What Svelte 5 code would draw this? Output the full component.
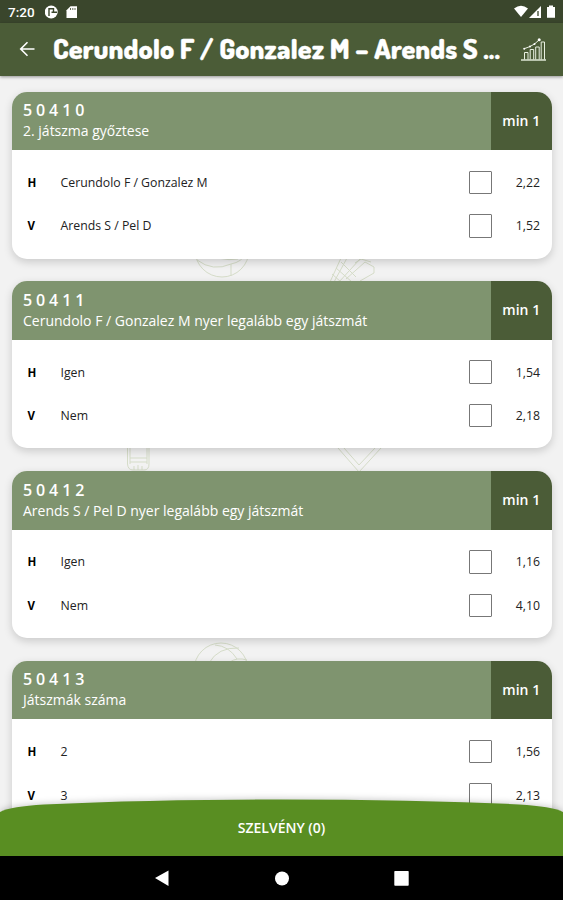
<script>
  const markets = [
    { id: '50410', name: '2. játszma győztese', picks: [['H', 'Cerundolo F / Gonzalez M', '2,22'], ['V', 'Arends S / Pel D', '1,52']] },
    { id: '50411', name: 'Cerundolo F / Gonzalez M nyer legalább egy játszmát', picks: [['H', 'Igen', '1,54'], ['V', 'Nem', '2,18']] },
    { id: '50412', name: 'Arends S / Pel D nyer legalább egy játszmát', picks: [['H', 'Igen', '1,16'], ['V', 'Nem', '4,10']] },
    { id: '50413', name: 'Játszmák száma', picks: [['H', '2', '1,56'], ['V', '3', '2,13']] }
  ];
</script>

<div class="screen">
  <div class="status">
    <span class="time">7:20</span>
    <svg class="left-icons" width="36" height="16" viewBox="0 0 36 16">
      <circle cx="6.2" cy="8" r="6.5" fill="#fff" />
      <path d="M4 12V4.800H8.500V8.200H6.500M8.800 8.200H12" fill="none" stroke="#3a462c" stroke-width="1.4" />
      <path d="M25.500 2.2H32V14H21.500V6.2Z" fill="#fff" />
      <path d="M25.500 4V6M27.800 4V6M30 4V6" stroke="#3a462c" stroke-width=".8" />
    </svg>
    <svg class="right-icons" width="44" height="16" viewBox="0 0 44 16">
      <path d="M0 4.4Q7-1 14 4.4L7 13Z" fill="#fff" />
      <path d="M15 14L27 2V14Z" fill="#fff" />
      <path d="M24 7V12" stroke="#3a462c" stroke-width="1.3" />
      <path d="M33 3.1H35V1.5H39V3.1H41V13.7H33Z" fill="#fff" />
    </svg>
  </div>
  <header>
    <svg class="back" width="17" height="16" viewBox="0 0 17 16" fill="none" stroke="#fff" stroke-width="1.6">
      <path d="M15.500 8H2M8.500 1.200L1.700 8L8.500 14.800" />
    </svg>
    <svg class="title" width="452" height="40" viewBox="0 0 452 40">
      <text x="0" y="27" textLength="447" lengthAdjust="spacingAndGlyphs">Cerundolo F / Gonzalez M – Arends S ...</text>
    </svg>
    <svg class="stats" width="26" height="25" viewBox="0 0 26 25" fill="none" stroke="#e8efe0" stroke-width="1">
      <path d="M0 23H25" stroke-width="1.4" />
      <path d="M3.5 22.5V15.5H7V22.5M9.2 22.5V12.5H12.7V22.5M14.7 22.5V10H18.2V22.5M20.2 22.5V5H23.5V22.5" />
      <path d="M3 11.8L9 9.5L13.5 7L18 3" />
      <circle cx="18.2" cy="2.8" r="1.5" fill="#fff" stroke="none" />
      <circle cx="3.2" cy="11.8" r="1" fill="#fff" stroke="none" />
      <circle cx="9" cy="9.4" r="1" fill="#fff" stroke="none" />
      <circle cx="13.5" cy="7" r="1" fill="#fff" stroke="none" />
    </svg>
  </header>

  <main>
    <svg class="pattern" width="563" height="781" viewBox="0 75 563 781" fill="none" stroke="#d5dcc8" stroke-width="1">
      <circle cx="222" cy="249" r="27" />
      <path d="M197 259Q213 271 231 263V275M231 263Q242 261 246 252M208 250Q219 261 238 258" />
      <path d="M330 281L341 257M334 281L347 257M339 281L360 258M332 273L341 281M336 267L352 281M341 261L356 276M346 278L365 261L374 266V272L360 280M355 262L361 258L371 261" />
      <path d="M127.500 445V463Q128 469 133 469H144Q149 469 149 463V445M130 445V463M147 445V463M130 457H147M130 461H147M134 469V465M138 469V464M142 469V465" />
      <path d="M338 447L359 471L381 447M344 447L359 464L375 447" />
      <circle cx="221" cy="669" r="27" />
      <path d="M209 662Q218 646 239 647M215 644Q229 645 237 658M230 661Q237 656 247 659" />
    </svg>
    {#each markets as m}
      <section>
        <div class="head">
          <div class="label">
            <div class="id">{m.id}</div>
            <div class="name">{m.name}</div>
          </div>
          <div class="min">min 1</div>
        </div>
        <div class="rows">
          {#each m.picks as p}
            <div class="row">
              <b>{p[0]}</b><span class="pick">{p[1]}</span><i></i><span class="odds">{p[2]}</span>
            </div>
          {/each}
        </div>
      </section>
    {/each}
    <div class="slip">
      <svg width="563" height="70" viewBox="0 0 563 70">
        <path d="M0 26C8 22 22 20 44 18.500Q150 13.500 281 13.500T519 18.500C541 20 555 22 563 26V70H0Z" />
      </svg>
      <span>SZELVÉNY (0)</span>
    </div>
  </main>

  <nav>
    <svg width="563" height="44" viewBox="0 0 563 44" fill="#fff">
      <path d="M155 22L168.500 14.500V30Z" />
      <circle cx="282" cy="22.500" r="7" />
      <rect x="394.300" y="15" width="14.400" height="14.700" rx=".7" />
    </svg>
  </nav>
</div>

<style>
  .screen {
    width: 563px; height: 900px; overflow: hidden;
    display: flex; flex-direction: column;
    font-family: "Open Sans", "Noto Sans", sans-serif;
    background: #f2f2f2;
  }
  svg { display: block; flex: none; }
  .status {
    height: 23px; flex: none; box-sizing: border-box; padding: 0 9px 0 8px;
    display: flex; align-items: center; background: #3a462c; color: #fff;
  }
  .time { font: 500 13.5px/23px Roboto, sans-serif; width: 37px; padding-top: 2px; }
  .left-icons { margin-top: 1px; }
  .right-icons { margin-left: auto; margin-right: -4px; }
  header {
    height: 52.500px; flex: none; box-sizing: border-box; padding-left: 19px;
    display: flex; align-items: center; background: #4b5c37;
    box-shadow: 0 1px 3px #0006; position: relative; z-index: 1;
  }
  .back { margin-right: 17px; }
  .title { margin-top: 6px; }
  .title text {
    font: 800 27.500px Dosis, Roboto, sans-serif; fill: #fff;
    stroke: #fff; stroke-width: .3px; stroke-linejoin: round;
  }
  .stats { margin-left: 16px; }
  main {
    position: relative; height: 780.500px; flex: none; box-sizing: border-box;
    padding: 16px 11.500px 0 12px; overflow: hidden;
    display: flex; flex-direction: column; gap: 22.800px;
  }
  .pattern { position: absolute; left: 0; top: 0; }
  section {
    position: relative; height: 167px; flex: none; border-radius: 15px;
    background: #fff; box-shadow: 0 3px 9px #0000002b; overflow: hidden;
  }
  .head { display: flex; height: 58.500px; color: #fff; }
  .label { flex: 1; background: #7f946f; padding: 8.500px 0 0 11px; }
  .id { font-weight: 600; font-size: 16px; line-height: 20px; letter-spacing: 3.900px; }
  .name { font-size: 14px; line-height: 21px; white-space: nowrap; }
  .min {
    width: 60.500px; background: #4b5c37; text-align: center;
    font-weight: 600; font-size: 14px; line-height: 58px;
  }
  .rows { padding-top: 10.500px; }
  .row { height: 43.500px; display: flex; align-items: center; font-size: 12.300px; color: #222; }
  .row b { width: 33px; padding-left: 15.500px; color: #000; font-size: 11.500px; }
  .pick { flex: 1; }
  i { width: 21.500px; height: 21.500px; border: 1px solid #777; border-radius: 1px; }
  .odds { width: 59.500px; box-sizing: border-box; text-align: right; padding-right: 11.500px; }
  .slip { position: absolute; left: 0; bottom: 0; width: 563px; height: 70px; }
  .slip svg { filter: drop-shadow(0 -1px 3px #0003); }
  .slip path { fill: #598e22; }
  .slip span {
    position: absolute; left: 0; right: 0; top: 32px; text-align: center;
    color: #fff; font-weight: 600; font-size: 14px; line-height: 20px;
  }
  nav { height: 44px; background: #000; flex: none; }
</style>
